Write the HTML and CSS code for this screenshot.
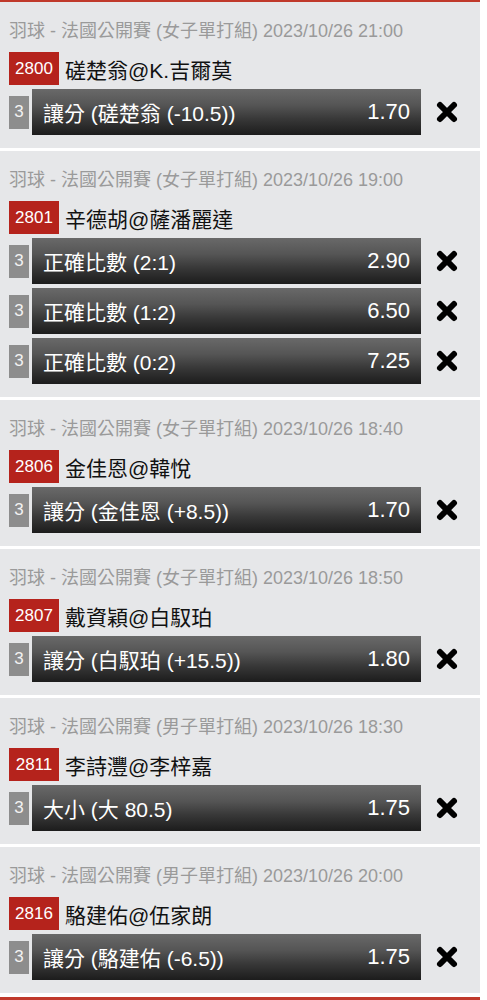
FILE: index.html
```html
<!DOCTYPE html>
<html lang="zh-Hant">
<head>
    <meta charset="UTF-8">
    <meta name="viewport" content="width=device-width, initial-scale=1.0">
    <title>投注單</title>
    <link rel="stylesheet" href="styles.css">
</head>
<body>
    <!-- Bet slip list -->
    <div class="slip">
        <div class="match">
            <div class="match-info">羽球 - 法國公開賽 (女子單打組) 2023/10/26 21:00</div>
            <div class="match-teams"><span class="match-no">2800</span>磋楚翁@K.吉爾莫</div>
            <div class="bet">
                <span class="bet-count">3</span>
                <div class="bet-bar"><span>讓分 (磋楚翁 (-10.5))</span><span class="odds">1.70</span></div>
                <span class="bet-remove"><svg viewBox="0 0 24 24"><path d="M5 5L19 19M19 5L5 19"/></svg></span>
            </div>
        </div>

        <div class="match">
            <div class="match-info">羽球 - 法國公開賽 (女子單打組) 2023/10/26 19:00</div>
            <div class="match-teams"><span class="match-no">2801</span>辛德胡@薩潘麗達</div>
            <div class="bet">
                <span class="bet-count">3</span>
                <div class="bet-bar"><span>正確比數 (2:1)</span><span class="odds">2.90</span></div>
                <span class="bet-remove"><svg viewBox="0 0 24 24"><path d="M5 5L19 19M19 5L5 19"/></svg></span>
            </div>
            <div class="bet">
                <span class="bet-count">3</span>
                <div class="bet-bar"><span>正確比數 (1:2)</span><span class="odds">6.50</span></div>
                <span class="bet-remove"><svg viewBox="0 0 24 24"><path d="M5 5L19 19M19 5L5 19"/></svg></span>
            </div>
            <div class="bet">
                <span class="bet-count">3</span>
                <div class="bet-bar"><span>正確比數 (0:2)</span><span class="odds">7.25</span></div>
                <span class="bet-remove"><svg viewBox="0 0 24 24"><path d="M5 5L19 19M19 5L5 19"/></svg></span>
            </div>
        </div>

        <div class="match">
            <div class="match-info">羽球 - 法國公開賽 (女子單打組) 2023/10/26 18:40</div>
            <div class="match-teams"><span class="match-no">2806</span>金佳恩@韓悅</div>
            <div class="bet">
                <span class="bet-count">3</span>
                <div class="bet-bar"><span>讓分 (金佳恩 (+8.5))</span><span class="odds">1.70</span></div>
                <span class="bet-remove"><svg viewBox="0 0 24 24"><path d="M5 5L19 19M19 5L5 19"/></svg></span>
            </div>
        </div>

        <div class="match">
            <div class="match-info">羽球 - 法國公開賽 (女子單打組) 2023/10/26 18:50</div>
            <div class="match-teams"><span class="match-no">2807</span>戴資穎@白馭珀</div>
            <div class="bet">
                <span class="bet-count">3</span>
                <div class="bet-bar"><span>讓分 (白馭珀 (+15.5))</span><span class="odds">1.80</span></div>
                <span class="bet-remove"><svg viewBox="0 0 24 24"><path d="M5 5L19 19M19 5L5 19"/></svg></span>
            </div>
        </div>

        <div class="match">
            <div class="match-info">羽球 - 法國公開賽 (男子單打組) 2023/10/26 18:30</div>
            <div class="match-teams"><span class="match-no">2811</span>李詩灃@李梓嘉</div>
            <div class="bet">
                <span class="bet-count">3</span>
                <div class="bet-bar"><span>大小 (大 80.5)</span><span class="odds">1.75</span></div>
                <span class="bet-remove"><svg viewBox="0 0 24 24"><path d="M5 5L19 19M19 5L5 19"/></svg></span>
            </div>
        </div>

        <div class="match">
            <div class="match-info">羽球 - 法國公開賽 (男子單打組) 2023/10/26 20:00</div>
            <div class="match-teams"><span class="match-no">2816</span>駱建佑@伍家朗</div>
            <div class="bet">
                <span class="bet-count">3</span>
                <div class="bet-bar"><span>讓分 (駱建佑 (-6.5))</span><span class="odds">1.75</span></div>
                <span class="bet-remove"><svg viewBox="0 0 24 24"><path d="M5 5L19 19M19 5L5 19"/></svg></span>
            </div>
        </div>
    </div>
</body>
</html>
```

FILE: styles.css
```css
body {
    margin: 0;
    padding: 0;
    background-color: #fff;
    font-family: "Liberation Sans", Arial, "Noto Sans CJK TC", sans-serif;
}

.slip {
    width: 480px;
    border-top: 2px solid #c0392b;
    border-bottom: 3px solid #c0392b;
}

.match {
    background-color: #e6e7e9;
    padding: 18px 0 13px 0;
    margin-bottom: 3px;
}

.match:last-child {
    margin-bottom: 4px;
}

.match-info {
    padding-left: 9px;
    font-size: 18px;
    line-height: 22px;
    color: #9a9a9a;
}

.match-teams {
    display: flex;
    align-items: center;
    margin: 10px 0 4px 9px;
    font-size: 21px;
    color: #111;
}

.match-no {
    width: 50px;
    height: 33px;
    line-height: 33px;
    margin-right: 6px;
    background-color: #b5231c;
    color: #fff;
    font-size: 17px;
    text-align: center;
}

.bet {
    display: flex;
    align-items: center;
    margin-bottom: 4px;
}

.bet:last-child {
    margin-bottom: 0;
}

.bet-count {
    width: 20px;
    height: 33px;
    line-height: 32px;
    margin: 0 3px 0 9px;
    background-color: #8d8d8d;
    color: #f2f2f2;
    font-size: 17px;
    text-align: center;
}

.bet-bar {
    display: flex;
    justify-content: space-between;
    align-items: center;
    width: 389px;
    height: 46px;
    box-sizing: border-box;
    padding: 0 11px;
    background: linear-gradient(to bottom, #696969 0%, #555 35%, #383838 65%, #1c1c1c 100%);
    color: #fff;
    font-size: 21px;
}

.odds {
    font-size: 22px;
}

.bet-remove {
    display: flex;
    margin-left: 14px;
}

.bet-remove svg {
    width: 24px;
    height: 24px;
    fill: none;
    stroke: #000;
    stroke-width: 6;
    stroke-linecap: round;
}
```
